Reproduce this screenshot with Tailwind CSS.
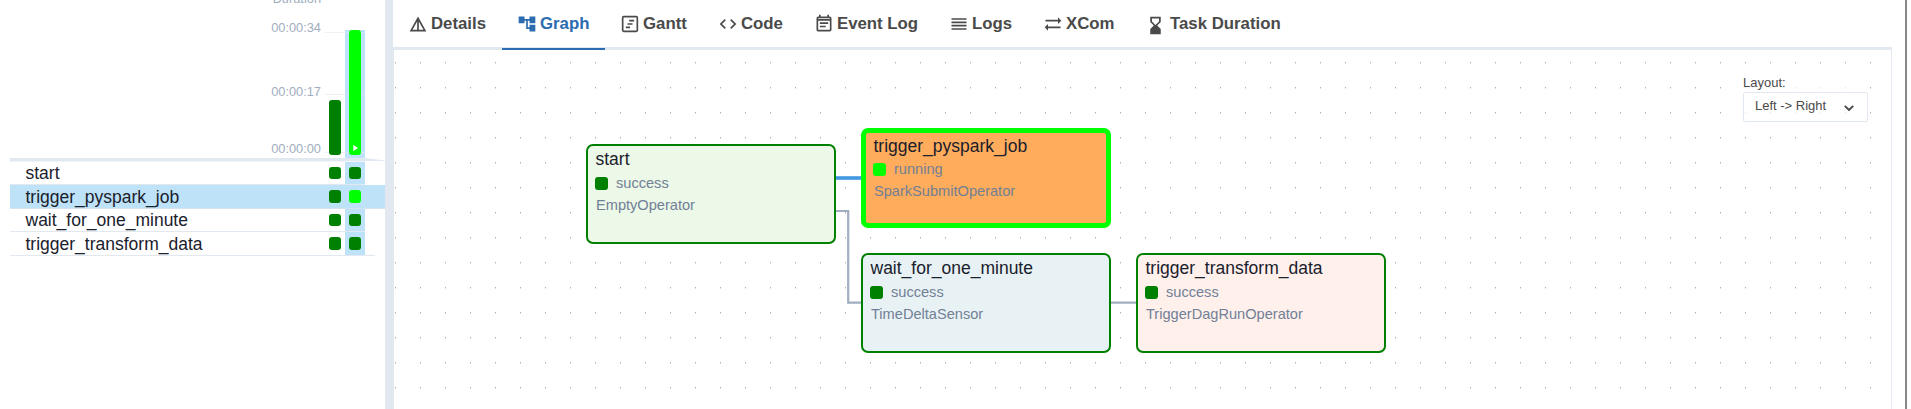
<!DOCTYPE html>
<html lang="en">
<head>
<meta charset="utf-8">
<title>DAG graph</title>
<script src="https://cdn.jsdelivr.net/npm/@tailwindcss/browser@4"></script>
</head>
<body class="bg-white font-['Liberation_Sans',Arial,sans-serif] text-[#1a202c]">
<div class="flex h-[409px] w-[1911px] overflow-hidden">
  <!-- Task grid -->
  <aside class="flex w-[385px] shrink-0 flex-col pl-[10px]">
    <div class="relative flex h-[158px] shrink-0">
      <div class="absolute left-[315px] top-[32px] z-10 h-px w-10 bg-[#e2e8f0]/60"></div>
      <div class="absolute left-[315px] top-[94px] z-10 h-px w-10 bg-[#e2e8f0]/60"></div>
      <div class="absolute left-[315px] top-[152px] z-10 h-px w-10 bg-[#e2e8f0]/60"></div>
      <div class="flex w-[311px] flex-col items-end text-[12.8px] leading-4 text-[#a0aec0]">
        <div class="-mt-[9px]">Duration</div>
        <div class="mt-[13px]">00:00:34</div>
        <div class="mt-[48px]">00:00:17</div>
        <div class="mt-[41px]">00:00:00</div>
      </div>
      <div class="z-20 ml-[8px] mt-[100px] h-[55px] w-3 rounded-[3px] bg-[#008000]"></div>
      <div class="ml-1 mt-[30px] flex w-5 justify-center bg-[#bee3f8]">
        <div class="z-20 flex h-[125px] w-3 items-end justify-center rounded-[3px] bg-[#00ff00] pb-1">
          <svg class="h-[6px] w-[5px]" viewBox="0 0 5 6" fill="#fff"><path d="M0.3 0L5 3L0.3 6z"/></svg>
        </div>
      </div>
    </div>
    <svg class="h-1 w-[375px] shrink-0" viewBox="0 0 375 4"><path d="M0 0H355L375 2.6V3H0z" fill="#e2e8f0"/><path d="M0 3H355V4H0z" fill="#f1f5f9"/></svg>
    <div class="flex h-[23px] w-[355px] shrink-0 border-b border-[#e2e8f0]">
      <div class="w-[319px] pl-[15.5px] text-[17.5px] leading-[23px]">start</div>
      <div class="mt-[5px] size-3 rounded-[3px] bg-[#008000]"></div>
      <div class="ml-1 flex w-5 justify-center bg-[#bee3f8] pt-[5px]"><div class="size-3 rounded-[3px] bg-[#008000]"></div></div>
    </div>
    <div class="flex h-[24px] w-[375px] shrink-0 border-b border-[#d3e3ef] bg-[#bee3f8]">
      <div class="w-[319px] pl-[15.5px] text-[17.5px] leading-[24px]">trigger_pyspark_job</div>
      <div class="mt-[5px] h-[13px] w-3 rounded-[3px] bg-[#008000]"></div>
      <div class="ml-1 flex w-5 justify-center pt-[5px]"><div class="h-[13px] w-3 rounded-[3px] bg-[#00ff00]"></div></div>
    </div>
    <div class="flex h-[23px] w-[355px] shrink-0 border-b border-[#e2e8f0]">
      <div class="w-[319px] pl-[15.5px] text-[17.5px] leading-[23px]">wait_for_one_minute</div>
      <div class="mt-[5px] size-3 rounded-[3px] bg-[#008000]"></div>
      <div class="ml-1 flex w-5 justify-center bg-[#bee3f8] pt-[5px]"><div class="size-3 rounded-[3px] bg-[#008000]"></div></div>
    </div>
    <div class="flex h-[24px] w-[365px] shrink-0 border-b border-[#e2e8f0]">
      <div class="w-[319px] pl-[15.5px] text-[17.5px] leading-[24px]">trigger_transform_data</div>
      <div class="mt-[5px] h-[13px] w-3 rounded-[3px] bg-[#008000]"></div>
      <div class="ml-1 flex w-5 justify-center bg-[#bee3f8] pt-[5px]"><div class="h-[13px] w-3 rounded-[3px] bg-[#008000]"></div></div>
    </div>
  </aside>
  <div class="w-2 shrink-0 bg-[#e2e8f0]"></div>

  <!-- Details panel -->
  <main class="flex w-[1499px] shrink-0 flex-col">
    <nav class="flex h-[50px] shrink-0 border-b-3 border-[#e2e8f0] text-[16.8px] font-bold leading-5 text-[#4a4a4a]">
      <div class="flex w-[109px] items-center gap-[3px] pt-px pl-[15px]">
        <svg class="size-[20px]" viewBox="0 0 24 24" fill="currentColor"><path d="M12 3L2 21h20L12 3zm1 5.92L18.6 19H13V8.92zm-2 0V19H5.4L11 8.92z"/></svg><span>Details</span>
      </div>
      <div class="-mb-[3px] flex w-[103px] items-center gap-[3px] border-b-2 border-[#2b6cb0] pl-[15px] text-[#2b6cb0]">
        <svg class="size-[20px]" viewBox="0 0 24 24" fill="currentColor"><path d="M22 11V3h-7v3H9V3H2v8h7V8h2v10h4v3h7v-8h-7v3h-2V8h2v3z"/></svg><span>Graph</span>
      </div>
      <div class="flex w-[99px] items-center gap-[3px] pt-px pl-[15px]">
        <svg class="size-5" viewBox="0 0 24 24" fill="none" stroke="currentColor" stroke-width="2"><rect x="3.2" y="3.2" width="17.6" height="17.6" rx="1.2"/><path d="M11 8h6M9 12h6M7 16h5"/></svg><span>Gantt</span>
      </div>
      <div class="flex w-[95px] items-center gap-[3px] pt-px pl-[14px]">
        <svg class="size-[20px]" viewBox="0 0 24 24" fill="currentColor"><path d="M9.4 16.6L4.8 12l4.6-4.6L8 6l-6 6 6 6 1.4-1.4zm5.2 0l4.6-4.6-4.6-4.6L16 6l6 6-6 6-1.4-1.4z"/></svg><span>Code</span>
      </div>
      <div class="flex w-[136px] items-center gap-[3px] pt-px pl-[15px]">
        <svg class="size-5" viewBox="0 0 24 24" fill="currentColor"><path d="M19 3h-1V1h-2v2H8V1H6v2H5c-1.11 0-1.99.9-1.99 2L3 19c0 1.1.89 2 2 2h14c1.1 0 2-.9 2-2V5c0-1.1-.9-2-2-2zm0 16H5V8h14v11zM5 6V5h14v1zM7 10h10v2H7zM7 14h7v2H7z"/></svg><span>Event Log</span>
      </div>
      <div class="flex w-[94px] items-center gap-[3px] pt-px pl-[14px]">
        <svg class="size-5" viewBox="0 0 24 24" fill="currentColor"><path d="M3 15h18v-2H3v2zm0 4h18v-2H3v2zm0-8h18V9H3v2zm0-6v2h18V5H3z"/></svg><span>Logs</span>
      </div>
      <div class="flex w-[102px] items-center gap-[3px] pt-px pl-[14px]">
        <svg class="size-[20px]" viewBox="0 0 24 24" fill="currentColor"><path d="M22 8l-4-4v3H3v2h15v3l4-4zM2 16l4 4v-3h15v-2H6v-3l-4 4z"/></svg><span>XCom</span>
      </div>
      <div class="flex w-[170px] items-center gap-1 pt-px pl-[14px]">
        <svg class="mt-[2px] size-[21px]" viewBox="0 0 24 24" fill="currentColor"><path d="M18 22l-.01-6L14 12l3.99-4.01L18 2H6v6l4 4-4 3.99V22h12zM8 7.5V4h8v3.5l-4 4-4-4z"/></svg><span>Task Duration</span>
      </div>
    </nav>

    <section class="relative h-[359px] overflow-hidden border-x border-[#e2e8f0]">
      <!-- Dotted background and edges -->
      <svg class="absolute inset-0 h-[359px] w-[1497px]">
        <defs><pattern id="dots" x="1" y="12" width="25" height="25" patternUnits="userSpaceOnUse"><rect width="1" height="1" fill="#b0b0b0"/><rect y="1" width="1" height="1" fill="#dcdcdc"/></pattern></defs>
        <rect width="1497" height="359" fill="url(#dots)"/>
        <g fill="none" stroke="#a0aec0" stroke-width="2.2">
          <path d="M440 161H454.2V252.6H468M716 252.6H743"/>
          <path d="M440 128H468" stroke="#4299e1" stroke-width="3.6"/>
        </g>
      </svg>
      <!-- Nodes -->
      <div class="absolute left-[192px] top-[94px] h-[100px] w-[250px] rounded-[7px] border-2 border-[#008000] bg-[#ecf8e8] pl-[7px] pt-[2px]">
        <div class="pl-[0.5px] text-[17.5px] leading-[22px]">start</div>
        <div class="mt-[5px] flex items-center gap-2 text-[14.6px] leading-[16px] text-[#718096]"><div class="size-[13px] rounded-[3px] bg-[#008000]"></div>success</div>
        <div class="mt-[6px] pl-px text-[14.6px] leading-4 text-[#718096]">EmptyOperator</div>
      </div>
      <div class="absolute left-[467px] top-[78px] h-[100px] w-[250px] rounded-[7px] border-5 border-[#00ff00] bg-[#ffac5c] pl-[7px] pt-[2px]">
        <div class="pl-[0.5px] text-[17.5px] leading-[22px]">trigger_pyspark_job</div>
        <div class="mt-[4px] flex items-center gap-2 text-[14.6px] leading-[16px] text-[#718096]"><div class="size-[13px] rounded-[3px] bg-[#00ff00]"></div>running</div>
        <div class="mt-[6px] pl-px text-[14.6px] leading-4 text-[#718096]">SparkSubmitOperator</div>
      </div>
      <div class="absolute left-[467px] top-[203px] h-[100px] w-[250px] rounded-[7px] border-2 border-[#008000] bg-[#e8f2f4] pl-[7px] pt-[2px]">
        <div class="pl-[0.5px] text-[17.5px] leading-[22px]">wait_for_one_minute</div>
        <div class="mt-[5px] flex items-center gap-2 text-[14.6px] leading-[16px] text-[#718096]"><div class="size-[13px] rounded-[3px] bg-[#008000]"></div>success</div>
        <div class="mt-[6px] pl-px text-[14.6px] leading-4 text-[#718096]">TimeDeltaSensor</div>
      </div>
      <div class="absolute left-[742px] top-[203px] h-[100px] w-[250px] rounded-[7px] border-2 border-[#008000] bg-[#fff0ec] pl-[7px] pt-[2px]">
        <div class="pl-[0.5px] text-[17.5px] leading-[22px]">trigger_transform_data</div>
        <div class="mt-[5px] flex items-center gap-2 text-[14.6px] leading-[16px] text-[#718096]"><div class="size-[13px] rounded-[3px] bg-[#008000]"></div>success</div>
        <div class="mt-[6px] pl-px text-[14.6px] leading-4 text-[#718096]">TriggerDagRunOperator</div>
      </div>
      <!-- Layout picker -->
      <div class="absolute left-[1349px] top-[24px] w-[125px] text-[13px] text-[#4a4a4a]">
        <div class="h-[18px] bg-white/70 leading-[18px]">Layout:</div>
        <div class="flex h-[30px] items-center justify-between rounded-[2px] border border-[#e2e8f0] bg-white/70 pb-[2px] pl-[11px] pr-[13px]">
          <span>Left -&gt; Right</span>
          <svg class="mt-[4px] h-[6px] w-[10px]" viewBox="0 0 10 6" fill="none" stroke="currentColor" stroke-width="1.9"><path d="M0.8 0.8L5 5L9.2 0.8"/></svg>
        </div>
      </div>
    </section>
  </main>
  <div class="ml-[13px] w-[2px] shrink-0 bg-[#888888]"></div>
</div>
</body>
</html>
